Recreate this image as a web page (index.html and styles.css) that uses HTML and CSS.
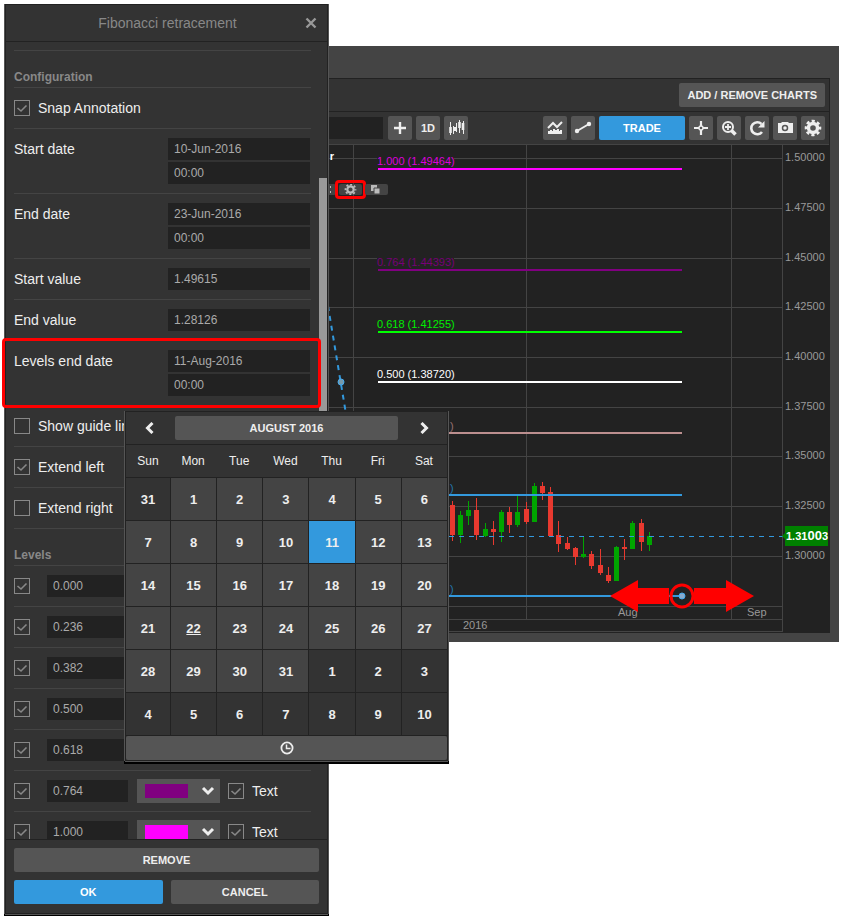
FILE: index.html
```html
<!DOCTYPE html>
<html lang="en">
<head>
    <meta charset="UTF-8">
    <meta name="viewport" content="width=device-width, initial-scale=1.0">
    <title>Fibonacci retracement</title>
    <link rel="stylesheet" href="styles.css">
</head>
<body>
    <div class="screen">
        <!-- Settings dialog -->
        <form class="dialog">
            <header class="dialog-header">
                <h1>Fibonacci retracement</h1>
                <button type="button" class="close" aria-label="Close">
                    <svg width="12" height="12" viewBox="0 0 12 12"><path d="M1.5 1.5l9 9M10.5 1.5l-9 9" stroke="currentColor" stroke-width="2.4"/></svg>
                </button>
            </header>

            <div class="dialog-body">
                <h2 class="section-title">Configuration</h2>
                <div class="row">
                    <input type="checkbox" id="snap" checked>
                    <label for="snap">Snap Annotation</label>
                </div>
                <div class="row">
                    <label class="name" for="startDate">Start date</label>
                    <div class="fields">
                        <input type="text" id="startDate" value="10-Jun-2016">
                        <input type="text" aria-label="Start time" value="00:00">
                    </div>
                </div>
                <div class="row">
                    <label class="name" for="endDate">End date</label>
                    <div class="fields">
                        <input type="text" id="endDate" value="23-Jun-2016">
                        <input type="text" aria-label="End time" value="00:00">
                    </div>
                </div>
                <div class="row">
                    <label class="name" for="startValue">Start value</label>
                    <div class="fields"><input type="text" id="startValue" value="1.49615"></div>
                </div>
                <div class="row">
                    <label class="name" for="endValue">End value</label>
                    <div class="fields"><input type="text" id="endValue" value="1.28126"></div>
                </div>
                <div class="row highlighted">
                    <label class="name" for="levelsEnd">Levels end date</label>
                    <div class="fields">
                        <input type="text" id="levelsEnd" value="11-Aug-2016">
                        <input type="text" aria-label="Levels end time" value="00:00">
                    </div>

                    <!-- Date picker popup -->
                    <div class="calendar">
                        <div class="calendar-header">
                            <button type="button" class="arrow" aria-label="Previous month">
                                <svg width="14" height="12" viewBox="0 0 14 12"><path d="M8.5 1l-5 5 5 5" fill="none" stroke="currentColor" stroke-width="3"/></svg>
                            </button>
                            <button type="button" class="btn month">AUGUST 2016</button>
                            <button type="button" class="arrow" aria-label="Next month">
                                <svg width="14" height="12" viewBox="0 0 14 12"><path d="M5.5 1l5 5-5 5" fill="none" stroke="currentColor" stroke-width="3"/></svg>
                            </button>
                        </div>
                        <table>
                            <thead>
                                <tr><th>Sun</th><th>Mon</th><th>Tue</th><th>Wed</th><th>Thu</th><th>Fri</th><th>Sat</th></tr>
                            </thead>
                            <tbody>
                                <tr>
                                    <td class="other"><button type="button">31</button></td>
                                    <td><button type="button">1</button></td>
                                    <td><button type="button">2</button></td>
                                    <td><button type="button">3</button></td>
                                    <td><button type="button">4</button></td>
                                    <td><button type="button">5</button></td>
                                    <td><button type="button">6</button></td>
                                </tr>
                                <tr>
                                    <td><button type="button">7</button></td>
                                    <td><button type="button">8</button></td>
                                    <td><button type="button">9</button></td>
                                    <td><button type="button">10</button></td>
                                    <td class="selected"><button type="button">11</button></td>
                                    <td><button type="button">12</button></td>
                                    <td><button type="button">13</button></td>
                                </tr>
                                <tr>
                                    <td><button type="button">14</button></td>
                                    <td><button type="button">15</button></td>
                                    <td><button type="button">16</button></td>
                                    <td><button type="button">17</button></td>
                                    <td><button type="button">18</button></td>
                                    <td><button type="button">19</button></td>
                                    <td><button type="button">20</button></td>
                                </tr>
                                <tr>
                                    <td><button type="button">21</button></td>
                                    <td class="today"><button type="button">22</button></td>
                                    <td><button type="button">23</button></td>
                                    <td><button type="button">24</button></td>
                                    <td><button type="button">25</button></td>
                                    <td><button type="button">26</button></td>
                                    <td><button type="button">27</button></td>
                                </tr>
                                <tr>
                                    <td><button type="button">28</button></td>
                                    <td><button type="button">29</button></td>
                                    <td><button type="button">30</button></td>
                                    <td><button type="button">31</button></td>
                                    <td class="other"><button type="button">1</button></td>
                                    <td class="other"><button type="button">2</button></td>
                                    <td class="other"><button type="button">3</button></td>
                                </tr>
                                <tr>
                                    <td class="other"><button type="button">4</button></td>
                                    <td class="other"><button type="button">5</button></td>
                                    <td class="other"><button type="button">6</button></td>
                                    <td class="other"><button type="button">7</button></td>
                                    <td class="other"><button type="button">8</button></td>
                                    <td class="other"><button type="button">9</button></td>
                                    <td class="other"><button type="button">10</button></td>
                                </tr>
                            </tbody>
                        </table>
                        <button type="button" class="btn time" aria-label="Choose time">
                            <svg width="14" height="14" viewBox="0 0 14 14" fill="none" stroke="currentColor"><circle cx="7" cy="7" r="5.6" stroke-width="1.8"/><path d="M6.5 3.5v4h4" stroke-width="1.5"/></svg>
                        </button>
                    </div>
                </div>
                <div class="row">
                    <input type="checkbox" id="guide">
                    <label for="guide">Show guide lines</label>
                </div>
                <div class="row">
                    <input type="checkbox" id="extendLeft" checked>
                    <label for="extendLeft">Extend left</label>
                </div>
                <div class="row">
                    <input type="checkbox" id="extendRight">
                    <label for="extendRight">Extend right</label>
                </div>

                <h2 class="section-title">Levels</h2>
                <div class="row level">
                    <input type="checkbox" aria-label="Show level 0.000" checked>
                    <input type="text" aria-label="Level" value="0.000">
                    <select class="color blue" aria-label="Color"><option>Blue</option></select>
                    <input type="checkbox" id="text0" checked>
                    <label for="text0">Text</label>
                </div>
                <div class="row level">
                    <input type="checkbox" aria-label="Show level 0.236" checked>
                    <input type="text" aria-label="Level" value="0.236">
                    <select class="color blue" aria-label="Color"><option>Blue</option></select>
                    <input type="checkbox" id="text1" checked>
                    <label for="text1">Text</label>
                </div>
                <div class="row level">
                    <input type="checkbox" aria-label="Show level 0.382" checked>
                    <input type="text" aria-label="Level" value="0.382">
                    <select class="color rose" aria-label="Color"><option>Rose</option></select>
                    <input type="checkbox" id="text2" checked>
                    <label for="text2">Text</label>
                </div>
                <div class="row level">
                    <input type="checkbox" aria-label="Show level 0.500" checked>
                    <input type="text" aria-label="Level" value="0.500">
                    <select class="color white" aria-label="Color"><option>White</option></select>
                    <input type="checkbox" id="text3" checked>
                    <label for="text3">Text</label>
                </div>
                <div class="row level">
                    <input type="checkbox" aria-label="Show level 0.618" checked>
                    <input type="text" aria-label="Level" value="0.618">
                    <select class="color lime" aria-label="Color"><option>Lime</option></select>
                    <input type="checkbox" id="text4" checked>
                    <label for="text4">Text</label>
                </div>
                <div class="row level">
                    <input type="checkbox" aria-label="Show level 0.764" checked>
                    <input type="text" aria-label="Level" value="0.764">
                    <select class="color purple" aria-label="Color"><option>Purple</option></select>
                    <input type="checkbox" id="text5" checked>
                    <label for="text5">Text</label>
                </div>
                <div class="row level">
                    <input type="checkbox" aria-label="Show level 1.000" checked>
                    <input type="text" aria-label="Level" value="1.000">
                    <select class="color magenta" aria-label="Color"><option>Magenta</option></select>
                    <input type="checkbox" id="text6" checked>
                    <label for="text6">Text</label>
                </div>
                <div class="scroll-thumb"></div>
            </div>

            <footer class="dialog-footer">
                <button type="button" class="btn remove">REMOVE</button>
                <button type="submit" class="btn primary">OK</button>
                <button type="button" class="btn">CANCEL</button>
            </footer>
        </form>

        <!-- Chart window -->
        <main class="window">
            <div class="window-title"></div>
            <div class="panel">
                <div class="bar top-bar">
                    <button type="button" class="btn">ADD / REMOVE CHARTS</button>
                </div>
                <div class="bar toolbar">
                    <input type="text" class="search" aria-label="Instrument">
                    <button type="button" class="btn icon" aria-label="Add">
                        <svg viewBox="0 0 24 24"><path d="M12 6v12M6 12h12" stroke="currentColor" stroke-width="2.4"/></svg>
                    </button>
                    <button type="button" class="btn icon">1D</button>
                    <button type="button" class="btn icon" aria-label="Chart type">
                        <svg viewBox="0 0 24 24" stroke="currentColor"><path d="M6.5 6v13M9.5 10v8M12.5 7v9M15.5 4v13M19.5 5v13"/><path d="M6.500 11v6M11 11v4M15.500 6v6M19 7v7" stroke-width="2.6"/></svg>
                    </button>
                    <div class="spacer"></div>
                    <button type="button" class="btn icon" aria-label="Studies">
                        <svg viewBox="0 0 24 24"><path d="M5 12l5-5 4 4 5-5" fill="none" stroke="currentColor" stroke-width="2"/><path d="M5 18v-3h2v-1h2v1h1v-2h2v1h2v-1h2v2h1v-1h2v4z" fill="currentColor"/></svg>
                    </button>
                    <button type="button" class="btn icon" aria-label="Annotations">
                        <svg viewBox="0 0 24 24" fill="currentColor"><path d="M6 15l12-7" stroke="currentColor" stroke-width="2"/><circle cx="6" cy="15" r="2.2"/><circle cx="18" cy="8" r="2.2"/></svg>
                    </button>
                    <button type="button" class="btn primary trade">TRADE</button>
                    <button type="button" class="btn icon" aria-label="Crosshair">
                        <svg viewBox="0 0 24 24"><path d="M12 5v5M12 14v5M5 12h5M14 12h5" stroke="currentColor" stroke-width="2.2"/><circle cx="12" cy="12" r="2" fill="none" stroke="currentColor" stroke-width="1.4"/></svg>
                    </button>
                    <button type="button" class="btn icon" aria-label="Zoom in">
                        <svg viewBox="0 0 24 24" fill="none" stroke="currentColor"><circle cx="11" cy="11" r="5" stroke-width="2"/><path d="M14.5 14.5l4 4" stroke-width="3.6"/><path d="M11 8v6M8 11h6" stroke-width="1.8"/></svg>
                    </button>
                    <button type="button" class="btn icon" aria-label="Reset">
                        <svg viewBox="0 0 24 24"><path d="M17 16a6 6 0 1 1-.5-8" fill="none" stroke="currentColor" stroke-width="2.6"/><path d="M19.5 5v6.5h-6.5z" fill="currentColor"/></svg>
                    </button>
                    <button type="button" class="btn icon" aria-label="Snapshot">
                        <svg viewBox="0 0 24 24"><path d="M5 7h3l1-1h6l1 1h4v10H5z" fill="currentColor"/><circle cx="12" cy="12" r="2.5" fill="none" stroke="#555" stroke-width="1.5"/></svg>
                    </button>
                    <button type="button" class="btn icon" aria-label="Settings">
                        <svg viewBox="0 0 24 24" fill="none" stroke="currentColor"><circle cx="12" cy="12" r="4.5" stroke-width="3.4"/><circle cx="12" cy="12" r="7" stroke-width="2.6" stroke-dasharray="3.1 2.398" stroke-dashoffset="1.55"/></svg>
                    </button>
                </div>

                <div class="chart">
                    <svg class="plot" viewBox="329 145 500 488">
                        <path class="grid" d="M353.5 145V619M526.5 145V619M731.5 145V619M782.5 145V631M329 158.5H782M329 208.5H782M329 258.5H782M329 307.5H782M329 357.5H782M329 407.5H782M329 456.5H782M329 506.5H782M329 556.5H782M329 606.5H782M329 619.5H782M329 631.5H783"/>

                        <!-- Axis labels -->
                        <g class="axis">
                            <text x="785" y="161">1.50000</text>
                            <text x="785" y="211">1.47500</text>
                            <text x="785" y="261">1.45000</text>
                            <text x="785" y="310">1.42500</text>
                            <text x="785" y="360">1.40000</text>
                            <text x="785" y="410">1.37500</text>
                            <text x="785" y="459">1.35000</text>
                            <text x="785" y="509">1.32500</text>
                            <text x="785" y="559">1.30000</text>
                            <text x="618" y="616">Aug</text>
                            <text x="747" y="616">Sep</text>
                            <text x="463" y="629">2016</text>
                        </g>

                        <text class="symbol" x="334" y="160" text-anchor="end">r</text>

                        <!-- Candles -->
                        <g class="down">
                            <path d="M452.5 501V541M476.5 498V540M493.5 521V545M509.5 507V533M526.5 502V524M542.5 482V500M550.5 487V536M558.5 521V552M567.5 537V550M575.5 547V565M591.5 551V569M600.5 549V575M608.5 567V583M624.5 539V560M641.5 519V551"/>
                            <path class="body" d="M452.5 505V535M476.5 510V535M493.5 529V532M509.5 512V525M526.5 509V522M542.5 486V493M550.5 492V536M558.5 535V544M567.5 543V549M575.5 548V557M591.5 554V566M600.5 565V573M608.5 575V581M624.5 547V549M641.5 523V542"/>
                        </g>
                        <g class="up">
                            <path d="M460.5 511V543M468.5 501V525M485.5 523V537M501.5 510V542M517.5 496V527M534.5 483V522M583.5 537V558M616.5 546V581M632.5 521V549M649.5 532V551"/>
                            <path class="body" d="M460.5 515V535M468.5 510V516M485.5 529V536M501.5 512V532M517.5 512V525M534.5 486V522M583.5 554V557M616.5 547V581M632.5 523V549M649.5 536V545"/>
                        </g>
                        <path class="price-line" d="M329 536.5H783"/>

                        <!-- Retracement levels -->
                        <path class="label-bg" d="M377 154h77v12h-77zM377 258h77v10h-77z"/>
                        <g class="levels">
                            <text x="377" y="165" fill="#d0d">1.000 (1.49464)</text>
                            <text x="377" y="266" fill="#707">0.764 (1.44393)</text>
                            <text x="377" y="328" fill="#0e0">0.618 (1.41255)</text>
                            <text x="377" y="378" fill="#fff">0.500 (1.38720)</text>
                            <text x="450" y="430" fill="#957070">)</text>
                            <text x="450" y="492" fill="#27a">)</text>
                            <text x="450" y="593" fill="#27a">)</text>
                            <path d="M378 169H682" stroke="#f0f"/>
                            <path d="M378 270H682" stroke="#800080"/>
                            <path d="M378 332H682" stroke="#0f0"/>
                            <path d="M378 382H682" stroke="#fff"/>
                            <path d="M378 433H682" stroke="#bc8f8f"/>
                            <path d="M378 495H682" stroke="#39d"/>
                            <path d="M378 596H682" stroke="#39d"/>
                        </g>
                        <path class="trend" d="M328 306L348 426"/>
                        <circle cx="341" cy="382" r="3" fill="#79a" stroke="#4ae"/>

                        <!-- Current price -->
                        <path class="tag" d="M785 526h43v20h-43v-7l-3-3 3-3z"/>
                        <text class="price" x="786" y="540">1.31<tspan class="pips">00</tspan>3</text>

                        <!-- Drag handle with direction arrows -->
                        <path class="drag" d="M610 596l28-16v8h31v16h-31v8zM754 596l-28-16v8h-32v16h32v8z"/>
                        <circle class="ring" cx="682" cy="596" r="11"/>
                        <circle cx="682" cy="596" r="3" fill="#8ac" stroke="#4ae"/>
                    </svg>

                    <div class="annotation-tools">
                        <button type="button" aria-label="Move">
                            <svg viewBox="0 0 23 11"><path d="M17 2h1v2h-1zM17 7h1v2h-1z" fill="currentColor"/></svg>
                        </button>
                        <button type="button" class="active" aria-label="Edit annotation">
                            <svg viewBox="0 0 23 11" fill="none" stroke="currentColor"><circle cx="11.5" cy="5.5" r="3.2" stroke-width="2.2"/><circle cx="11.5" cy="5.5" r="5" stroke-width="1.8" stroke-dasharray="2 1.927" stroke-dashoffset="1"/></svg>
                        </button>
                        <button type="button" aria-label="Duplicate annotation">
                            <svg viewBox="0 0 23 11"><path d="M6 1h6v6H6z" fill="currentColor"/><path d="M9 4h6v6H9z" fill="currentColor" stroke="#444"/></svg>
                        </button>
                    </div>
                </div>
            </div>
        </main>
    </div>
</body>
</html>
```

FILE: styles.css
```css
:root {
    --dark: #222;
    --base: #333;
    --light: #444;
    --button: #555;
    --muted: #999;
    --text: #eee;
    --accent: #39d;
    --mark: #f00;
}

* {
    margin: 0;
    padding: 0;
    box-sizing: border-box;
    font-family: "Liberation Sans", Arial, sans-serif;
}

body {
    background: #fff;
    color: var(--text);
    font-size: 14px;
}

button,
input,
select {
    border: none;
    border-radius: 0;
    outline: none;
    color: inherit;
}

button {
    cursor: pointer;
}

.screen {
    display: flex;
    align-items: flex-start;
    padding: 4px 2px 4px 5px;
}

/* Buttons */
.btn {
    height: 24px;
    background: var(--button);
    border-radius: 2px;
    font-size: 11px;
    font-weight: bold;
}

.btn.primary {
    background: var(--accent);
    color: #fff;
}

/* Dialog */
.dialog {
    position: relative;
    z-index: 2;
    display: flex;
    flex-direction: column;
    flex: none;
    width: 323px;
    height: calc(100vh - 8px);
    margin-right: 1px;
    background: var(--base);
    border: 1px solid var(--dark);
    box-shadow: -1px 0 var(--button), 1px 0 var(--button), 0 1px var(--button), -1px 2px #000, 1px 2px #000;
}

.dialog-header {
    display: flex;
    align-items: center;
    flex: none;
    height: 37px;
    padding: 0 10px 0 8px;
    border-bottom: 1px solid var(--dark);
}

.dialog-header h1 {
    flex: 1;
    padding-left: 16px;
    text-align: center;
    font-size: 14px;
    font-weight: normal;
    color: #888;
}

.close {
    width: 12px;
    height: 12px;
    background: none;
    color: var(--muted);
}

.close svg {
    display: block;
}

.dialog-body {
    position: relative;
    flex: 1;
    min-height: 0;
    padding: 8px 16px 0 8px;
    overflow-y: clip;
}

.section-title {
    padding: 18px 0 2px;
    border-bottom: 1px solid var(--light);
    font-size: 12px;
    line-height: 16px;
    color: #888;
}

.section-title:first-child {
    border-top: 1px solid var(--light);
}

.row {
    display: flex;
    align-items: center;
    min-height: 41px;
    padding: 9px 0;
    border-bottom: 1px solid var(--light);
}

.row .name {
    align-self: flex-start;
    width: 154px;
    line-height: 22px;
}

.fields {
    flex: 1;
    display: grid;
    gap: 2px;
    padding-right: 1px;
}

input[type="text"] {
    width: 100%;
    height: 22px;
    padding: 0 6px;
    background: var(--dark);
    color: #aaa;
    font-size: 12px;
}

input[type="checkbox"] {
    appearance: none;
    flex: none;
    width: 16px;
    height: 16px;
    margin-right: 8px;
    border: 1px solid #888;
}

input[type="checkbox"]:checked {
    background: url("data:image/svg+xml,%3Csvg xmlns='http://www.w3.org/2000/svg' viewBox='0 0 14 14'%3E%3Cpath d='M2.5 7l3.5 3 5.5-5.5' fill='none' stroke='%23888' stroke-width='1.6'/%3E%3C/svg%3E") center / 14px no-repeat;
}

.level input[type="text"] {
    width: 81px;
    margin: 0 9px;
}

.color {
    appearance: none;
    width: 83px;
    height: 24px;
    margin: -1px 8px -1px 0;
    background-color: var(--button);
    background-image: url("data:image/svg+xml,%3Csvg xmlns='http://www.w3.org/2000/svg' viewBox='0 0 14 10'%3E%3Cpath d='M2 2l5 5 5-5' fill='none' stroke='%23eee' stroke-width='3'/%3E%3C/svg%3E"), linear-gradient(var(--swatch), var(--swatch));
    background-position: right 5px center, 8px center;
    background-size: 14px 10px, 43px 14px;
    background-repeat: no-repeat;
    color: transparent;
}

.blue { --swatch: #39d; }
.rose { --swatch: #bc8f8f; }
.white { --swatch: #fff; }
.lime { --swatch: #0f0; }
.purple { --swatch: #800080; }
.magenta { --swatch: #f0f; }

.highlighted {
    position: relative;
    z-index: 3;
}

.highlighted::after {
    content: "";
    position: absolute;
    inset: -3px -10px -3px -12px;
    border: 3px solid var(--mark);
    border-radius: 4px;
    pointer-events: none;
}

.scroll-thumb {
    position: absolute;
    top: 136px;
    right: 0;
    width: 8px;
    height: 420px;
    background: var(--muted);
}

.dialog-footer {
    position: relative;
    display: grid;
    grid-template-columns: 1fr 1fr;
    gap: 8px;
    padding: 8px 8px 9px;
    border-top: 1px solid var(--dark);
    background: var(--base);
}

.remove {
    grid-column: span 2;
}

/* Calendar */
.calendar {
    position: absolute;
    z-index: 4;
    top: calc(100% + 6px);
    left: 111px;
    width: 323px;
    background: var(--base);
    border: 1px solid var(--dark);
    box-shadow: -1px 0 var(--button), 1px 0 var(--button), 0 1px var(--button), -1px 3px #000, 1px 3px #000;
}

.calendar-header {
    display: flex;
    align-items: center;
    padding: 4px 0;
    border-bottom: 1px solid var(--dark);
}

.arrow {
    flex: none;
    width: 49px;
    height: 24px;
    background: none;
}

.arrow svg,
.time svg {
    display: block;
    margin: 0 auto;
}

.month {
    flex: 1;
}

.calendar table {
    width: 100%;
    table-layout: fixed;
    border-collapse: separate;
    border-spacing: 0;
}

.calendar th {
    height: 33px;
    border-bottom: 1px solid var(--dark);
    font-size: 12px;
    font-weight: normal;
}

.calendar th:first-child {
    width: 44px;
}

.calendar td {
    height: 43px;
    border-bottom: 1px solid var(--dark);
    background: var(--light);
}

.calendar td + td {
    border-left: 1px solid var(--dark);
}

.calendar td.other {
    background: var(--base);
}

.calendar td.selected {
    background: var(--accent);
}

.calendar td button {
    display: block;
    width: 100%;
    height: 42px;
    background: none;
    font-size: 13px;
    font-weight: bold;
}

.calendar .today button {
    text-decoration: underline;
}

.time {
    display: block;
    width: 100%;
}

/* Chart window */
.window {
    flex: 1;
    min-width: 0;
    margin-top: 42px;
    padding: 0 9px 9px 0;
    background: var(--light);
}

.window-title {
    height: 32px;
}

.panel {
    border-top: 1px solid var(--dark);
    border-right: 1px solid var(--dark);
}

.bar {
    display: flex;
    align-items: center;
    gap: 4px;
    height: 33px;
    padding-right: 4px;
    background: var(--base);
    border-bottom: 1px solid var(--dark);
}

.top-bar {
    justify-content: flex-end;
}

.top-bar .btn {
    padding: 0 8px;
}

.toolbar {
    border-bottom-color: var(--light);
}

.toolbar .search {
    width: 54px;
    margin-right: 1px;
}

.icon {
    flex: none;
    width: 24px;
}

.icon svg {
    display: block;
    width: 24px;
    height: 24px;
}

.trade {
    width: 86px;
}

.spacer {
    flex: 1;
}

.chart {
    position: relative;
    background: var(--dark);
}

.plot {
    display: block;
    width: 100%;
    font-size: 11px;
}

.grid {
    fill: none;
    stroke: var(--light);
}

.axis {
    fill: var(--muted);
}

.symbol {
    fill: #fff;
    font-weight: bold;
}

.down {
    stroke: #e8392f;
}

.up {
    stroke: #00a500;
}

.body {
    stroke-width: 5;
}

.price-line {
    stroke: var(--accent);
    stroke-dasharray: 5 5;
}

.label-bg {
    fill: var(--dark);
}

.levels path {
    stroke-width: 2;
}

.trend {
    stroke: var(--accent);
    stroke-width: 2;
    stroke-dasharray: 5 5;
}

.tag {
    fill: #008000;
}

.price {
    fill: #fff;
    font-weight: bold;
}

.pips {
    font-size: 13px;
}

.drag {
    fill: var(--mark);
}

.ring {
    fill: none;
    stroke: var(--mark);
    stroke-width: 3;
}

.annotation-tools {
    position: absolute;
    top: 39px;
    left: -16px;
    display: flex;
    gap: 3px;
}

.annotation-tools button {
    position: relative;
    width: 23px;
    height: 11px;
    background: var(--light);
    border-radius: 2px;
    color: #bbb;
}

.annotation-tools svg {
    display: block;
    width: 23px;
    height: 11px;
}

.annotation-tools .active::after {
    content: "";
    position: absolute;
    inset: -4px;
    border: 3px solid var(--mark);
    border-radius: 4px;
}
```
